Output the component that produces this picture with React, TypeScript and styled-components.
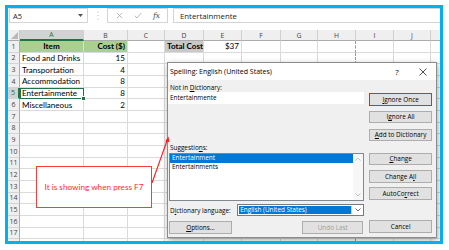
import React from "react";
import styled, { createGlobalStyle, css } from "styled-components";

const Global = createGlobalStyle`
  html, body { margin: 0; padding: 0; background: #fff; }
  body { width: 449px; height: 250px; overflow: hidden; }
`;

const Page = styled.div`
  width: 449px;
  height: 250px;
  padding: 5px 0 0 5px;
  box-sizing: border-box;
`;

const Frame = styled.div`
  position: relative;
  width: 438px;
  height: 239px;
  box-sizing: border-box;
  border: 3px solid #00b0f0;
  overflow: hidden;
  display: flex;
  flex-direction: column;
  background: #fff;
`;

/* ---------- formula bar ---------- */
const FormulaBar = styled.div`
  flex: none;
  height: 22px;
  display: flex;
  align-items: flex-start;
  padding-left: 1px;
  background: #fff;
`;

const NameBox = styled.div`
  width: 79px;
  height: 15px;
  box-sizing: border-box;
  border: 1px solid #d4d4d4;
  display: flex;
  align-items: center;
  justify-content: space-between;
  padding: 0 4px 0 3px;
  font: 7.5px "Open Sans", sans-serif;
  color: #222;
`;

const Grip = styled.div`
  width: 19px;
  height: 15px;
  display: flex;
  align-items: center;
  justify-content: center;
`;

const FxBox = styled.div`
  width: 61px;
  height: 15px;
  box-sizing: border-box;
  border: 1px solid #d4d4d4;
  display: flex;
  align-items: center;
  justify-content: space-around;
  padding: 0 2px;
`;

const FxText = styled.span`
  font: italic 8px "DejaVu Serif", serif;
  color: #555;
  letter-spacing: -0.5px;
`;

const FormulaInput = styled.div`
  flex: 1;
  margin-left: 5px;
  height: 15px;
  box-sizing: border-box;
  border: 1px solid #d4d4d4;
  border-right: none;
  padding-left: 6px;
  display: flex;
  align-items: center;
  font: 7.8px "Open Sans", sans-serif;
  color: #222;
`;

/* ---------- sheet ---------- */
const Sheet = styled.div`
  flex: 1;
  overflow: hidden;
  display: grid;
  grid-template-columns: 12px 64px 44px 37px 39px 38px 39px 37px 38px 38px 37px 30px;
  grid-template-rows: 11px repeat(18, 11.66px);
  font-family: Lato, "Liberation Sans", sans-serif;
  font-size: 8.1px;
  color: #000;
`;

const Corner = styled.div`
  background: #efefef;
  border-right: 1px solid #c8c8c8;
  border-bottom: 1px solid #ababab;
  box-sizing: border-box;
  display: flex;
  align-items: flex-end;
  justify-content: flex-end;
  padding: 0 1px 1px 0;
`;

const ColHead = styled.div<{ $sel?: boolean }>`
  box-sizing: border-box;
  background: #efefef;
  border-right: 1px solid #d0d0d0;
  border-bottom: 1px solid #ababab;
  display: flex;
  align-items: center;
  justify-content: center;
  font: 6.8px "Open Sans", sans-serif;
  color: #444;
  ${(p) =>
    p.$sel &&
    css`
      background: #d2d2d2;
      color: #217346;
      border-bottom: 2px solid #217346;
    `}
`;

const RowHead = styled.div<{ $sel?: boolean }>`
  box-sizing: border-box;
  background: #efefef;
  border-right: 1px solid #ababab;
  border-bottom: 1px solid #d4d4d4;
  display: flex;
  align-items: center;
  justify-content: center;
  font: 7px "Open Sans", sans-serif;
  color: #444;
  ${(p) =>
    p.$sel &&
    css`
      background: #d2d2d2;
      color: #217346;
      border-right: 2px solid #217346;
    `}
`;

const Cell = styled.div<{
  $fill?: string;
  $bold?: boolean;
  $align?: "left" | "center" | "right";
  $pb?: boolean;
  $sel?: boolean;
}>`
  position: relative;
  box-sizing: border-box;
  background: ${(p) => p.$fill || "#fff"};
  border-right: 1px ${(p) => (p.$pb ? "dashed #9a9a9a" : "solid #dadada")};
  border-bottom: 1px solid #dadada;
  display: flex;
  align-items: center;
  justify-content: ${(p) =>
    p.$align === "right" ? "flex-end" : p.$align === "center" ? "center" : "flex-start"};
  padding: 0 2px;
  white-space: nowrap;
  font-weight: ${(p) => (p.$bold ? 700 : 400)};
  ${(p) =>
    p.$sel &&
    css`
      z-index: 2;
      outline: 1.5px solid #217346;
      outline-offset: -1px;
      &::after {
        content: "";
        position: absolute;
        right: -3px;
        bottom: -3px;
        width: 3px;
        height: 3px;
        background: #217346;
        border: 1px solid #fff;
      }
    `}
`;

/* ---------- callout ---------- */
const Callout = styled.div`
  position: absolute;
  left: 28px;
  top: 158px;
  width: 116px;
  height: 42px;
  box-sizing: border-box;
  border: 1px solid #ff3a3a;
  background: #fff;
  display: flex;
  align-items: center;
  justify-content: center;
  font: 8.2px Lato, sans-serif;
  color: #ff2b2b;
  z-index: 3;
`;

const ArrowSvg = styled.svg`
  position: absolute;
  left: 140px;
  top: 126px;
  z-index: 6;
  overflow: visible;
`;

/* ---------- dialog ---------- */
const Dialog = styled.div`
  position: absolute;
  left: 159px;
  top: 54px;
  width: 270px;
  height: 176px;
  box-sizing: border-box;
  border: 1px solid #8c8c8c;
  background: #f0f0f0;
  box-shadow: 1px 2px 6px rgba(0, 0, 0, 0.35);
  z-index: 5;
  display: flex;
  flex-direction: column;
  font: 6.4px "Open Sans", sans-serif;
  color: #000;
`;

const TitleBar = styled.div`
  height: 17px;
  flex: none;
  background: #fff;
  display: flex;
  align-items: center;
  padding: 0 0 0 2px;
  font-size: 7px;
`;

const TitleText = styled.div`
  flex: 1;
`;

const TitleBtn = styled.div`
  width: 26px;
  display: flex;
  justify-content: center;
  align-items: center;
  font-size: 8px;
`;

const Body = styled.div`
  flex: 1;
  display: flex;
  gap: 5px;
  padding: 0 4px 0 0;
`;

const LeftCol = styled.div`
  width: 197px;
  display: flex;
  flex-direction: column;
`;

const RightCol = styled.div`
  width: 63px;
  display: flex;
  flex-direction: column;
`;

const Label = styled.div<{ $mt?: number }>`
  margin-top: ${(p) => p.$mt ?? 0}px;
  height: 9px;
  line-height: 9px;
  padding-left: 2px;
`;

const TextBox = styled.div`
  height: 12px;
  background: #fff;
  line-height: 12px;
  padding-left: 2px;
`;

const ListBox = styled.div`
  margin: 1px 0 0 1px;
  height: 48px;
  box-sizing: border-box;
  border: 1px solid #828790;
  background: #fff;
  display: flex;
`;

const ListItems = styled.div`
  flex: 1;
  display: flex;
  flex-direction: column;
`;

const ListItem = styled.div<{ $sel?: boolean }>`
  height: 8.5px;
  line-height: 8.5px;
  padding-left: 2px;
  background: ${(p) => (p.$sel ? "#0078d7" : "transparent")};
  color: ${(p) => (p.$sel ? "#fff" : "#000")};
`;

const ScrollBar = styled.div`
  width: 10px;
  background: #f7f7f7;
  display: flex;
  flex-direction: column;
  justify-content: space-between;
  align-items: center;
  padding: 3px 0;
`;

const LangRow = styled.div`
  margin-top: 3px;
  height: 12px;
  display: flex;
  align-items: center;
  justify-content: space-between;
  padding-left: 2px;
`;

const Select = styled.div`
  width: 127px;
  height: 12px;
  box-sizing: border-box;
  border: 1px solid #7a7a7a;
  background: #fff;
  display: flex;
  padding: 1px 0 1px 1px;
`;

const SelectValue = styled.div`
  flex: 1;
  background: #0078d7;
  color: #fff;
  line-height: 8px;
  padding-left: 1px;
`;

const SelectArrow = styled.div`
  width: 11px;
  display: flex;
  align-items: center;
  justify-content: center;
  border-left: 1px solid #d0d0d0;
`;

const BottomRow = styled.div`
  margin-top: 5px;
  display: flex;
  justify-content: space-between;
  padding: 0 1px 0 1px;
`;

const Button = styled.div<{ $mt?: number; $w?: number; $focus?: boolean; $dis?: boolean }>`
  margin-top: ${(p) => p.$mt ?? 0}px;
  width: ${(p) => (p.$w ? `${p.$w}px` : "100%")};
  height: 12.5px;
  box-sizing: border-box;
  background: #e1e1e1;
  border: 1px solid ${(p) => (p.$focus ? "#0078d7" : "#adadad")};
  display: flex;
  align-items: center;
  justify-content: center;
  color: ${(p) => (p.$dis ? "#a0a0a0" : "#000")};
`;

const U = styled.span`
  text-decoration: underline;
`;

const colLetters = ["A", "B", "C", "D", "E", "F", "G", "H", "I", "J", ""];

type CellDef = {
  v?: string;
  fill?: string;
  bold?: boolean;
  align?: "left" | "center" | "right";
};

const data: CellDef[][] = [
  [
    { v: "Item", fill: "#a9d08e", bold: true, align: "center" },
    { v: "Cost ($)", fill: "#a9d08e", bold: true, align: "right" },
    {},
    { v: "Total Cost", fill: "#c9c9c9", bold: true },
    { v: "$37", align: "right" },
  ],
  [{ v: "Food and Drinks" }, { v: "15", align: "right" }],
  [{ v: "Transportation" }, { v: "4", align: "right" }],
  [{ v: "Accommodation" }, { v: "8", align: "right" }],
  [{ v: "Entertainmente" }, { v: "8", align: "right" }],
  [{ v: "Miscellaneous" }, { v: "2", align: "right" }],
];

const ChevronUp = () => (
  <svg width="6" height="4" viewBox="0 0 6 4">
    <path d="M0.5 3.5 L3 1 L5.5 3.5" fill="none" stroke="#b5b5b5" strokeWidth="0.8" />
  </svg>
);
const ChevronDown = ({ color = "#b5b5b5" }: { color?: string }) => (
  <svg width="6" height="4" viewBox="0 0 6 4">
    <path d="M0.5 0.5 L3 3 L5.5 0.5" fill="none" stroke={color} strokeWidth="0.8" />
  </svg>
);

export default function App() {
  const rows = [];
  for (let r = 0; r < 18; r++) {
    const cells = [];
    cells.push(
      <RowHead key="h" $sel={r === 4}>
        {r < 17 ? r + 1 : ""}
      </RowHead>
    );
    for (let c = 0; c < 11; c++) {
      const d = data[r]?.[c] || {};
      cells.push(
        <Cell
          key={c}
          $fill={d.fill}
          $bold={d.bold}
          $align={d.align}
          $pb={c === 7}
          $sel={r === 4 && c === 0}
        >
          {d.v}
        </Cell>
      );
    }
    rows.push(<React.Fragment key={r}>{cells}</React.Fragment>);
  }

  return (
    <>
      <Global />
      <Page>
        <Frame>
          <FormulaBar>
            <NameBox>
              <span>A5</span>
              <svg width="5" height="3" viewBox="0 0 5 3">
                <path d="M0 0 L5 0 L2.5 3 Z" fill="#555" />
              </svg>
            </NameBox>
            <Grip>
              <svg width="2" height="9" viewBox="0 0 2 9">
                <circle cx="1" cy="1" r="0.6" fill="#b0b0b0" />
                <circle cx="1" cy="4.5" r="0.6" fill="#b0b0b0" />
                <circle cx="1" cy="8" r="0.6" fill="#b0b0b0" />
              </svg>
            </Grip>
            <FxBox>
              <svg width="7" height="7" viewBox="0 0 7 7">
                <path d="M1 1 L6 6 M6 1 L1 6" stroke="#a8a8a8" strokeWidth="0.8" />
              </svg>
              <svg width="8" height="7" viewBox="0 0 8 7">
                <path d="M0.8 3.8 L3 6 L7.2 1" fill="none" stroke="#a8a8a8" strokeWidth="0.8" />
              </svg>
              <FxText>fx</FxText>
            </FxBox>
            <FormulaInput>Entertainmente</FormulaInput>
          </FormulaBar>

          <Sheet>
            <Corner>
              <svg width="7" height="7" viewBox="0 0 7 7">
                <path d="M7 0 L7 7 L0 7 Z" fill="#b8b8b8" />
              </svg>
            </Corner>
            {colLetters.map((l, i) => (
              <ColHead key={i} $sel={i === 0}>
                {l}
              </ColHead>
            ))}
            {rows}
          </Sheet>

          <Callout>It is showing when press F7</Callout>

          <Dialog>
            <TitleBar>
              <TitleText>Spelling: English (United States)</TitleText>
              <TitleBtn>?</TitleBtn>
              <TitleBtn>
                <svg width="8" height="8" viewBox="0 0 8 8">
                  <path d="M0.5 0.5 L7.5 7.5 M7.5 0.5 L0.5 7.5" stroke="#222" strokeWidth="0.8" />
                </svg>
              </TitleBtn>
            </TitleBar>
            <Body>
              <LeftCol>
                <Label $mt={3}>
                  Not in <U>D</U>ictionary:
                </Label>
                <TextBox>Entertainmente</TextBox>
                <Label $mt={39}>
                  Suggestio<U>n</U>s:
                </Label>
                <ListBox>
                  <ListItems>
                    <ListItem $sel>Entertainment</ListItem>
                    <ListItem>Entertainments</ListItem>
                  </ListItems>
                  <ScrollBar>
                    <ChevronUp />
                    <ChevronDown />
                  </ScrollBar>
                </ListBox>
                <LangRow>
                  <span>
                    D<U>i</U>ctionary language:
                  </span>
                  <Select>
                    <SelectValue>English (United States)</SelectValue>
                    <SelectArrow>
                      <ChevronDown color="#444" />
                    </SelectArrow>
                  </Select>
                </LangRow>
                <BottomRow>
                  <Button $w={63}>
                    <U>O</U>ptions...
                  </Button>
                  <Button $w={61} $dis>
                    Undo Last
                  </Button>
                </BottomRow>
              </LeftCol>
              <RightCol>
                <Button $mt={13} $focus>
                  <U>I</U>gnore Once
                </Button>
                <Button $mt={5}>
                  I<U>g</U>nore All
                </Button>
                <Button $mt={5.5}>
                  <U>A</U>dd to Dictionary
                </Button>
                <Button $mt={11.5}>
                  <U>C</U>hange
                </Button>
                <Button $mt={5}>
                  Change A<U>l</U>l
                </Button>
                <Button $mt={4.5}>
                  AutoCo<U>r</U>rect
                </Button>
                <Button $mt={20.5}>Cancel</Button>
              </RightCol>
            </Body>
          </Dialog>

          <ArrowSvg width="24" height="54" viewBox="0 0 24 54">
            <path d="M4 49 L19.6 5" stroke="#ff1a1a" strokeWidth="1.1" fill="none" />
            <path d="M20.5 2.5 L17.2 7.4 L21.4 8.1 Z" fill="#ff1a1a" />
          </ArrowSvg>
        </Frame>
      </Page>
    </>
  );
}
